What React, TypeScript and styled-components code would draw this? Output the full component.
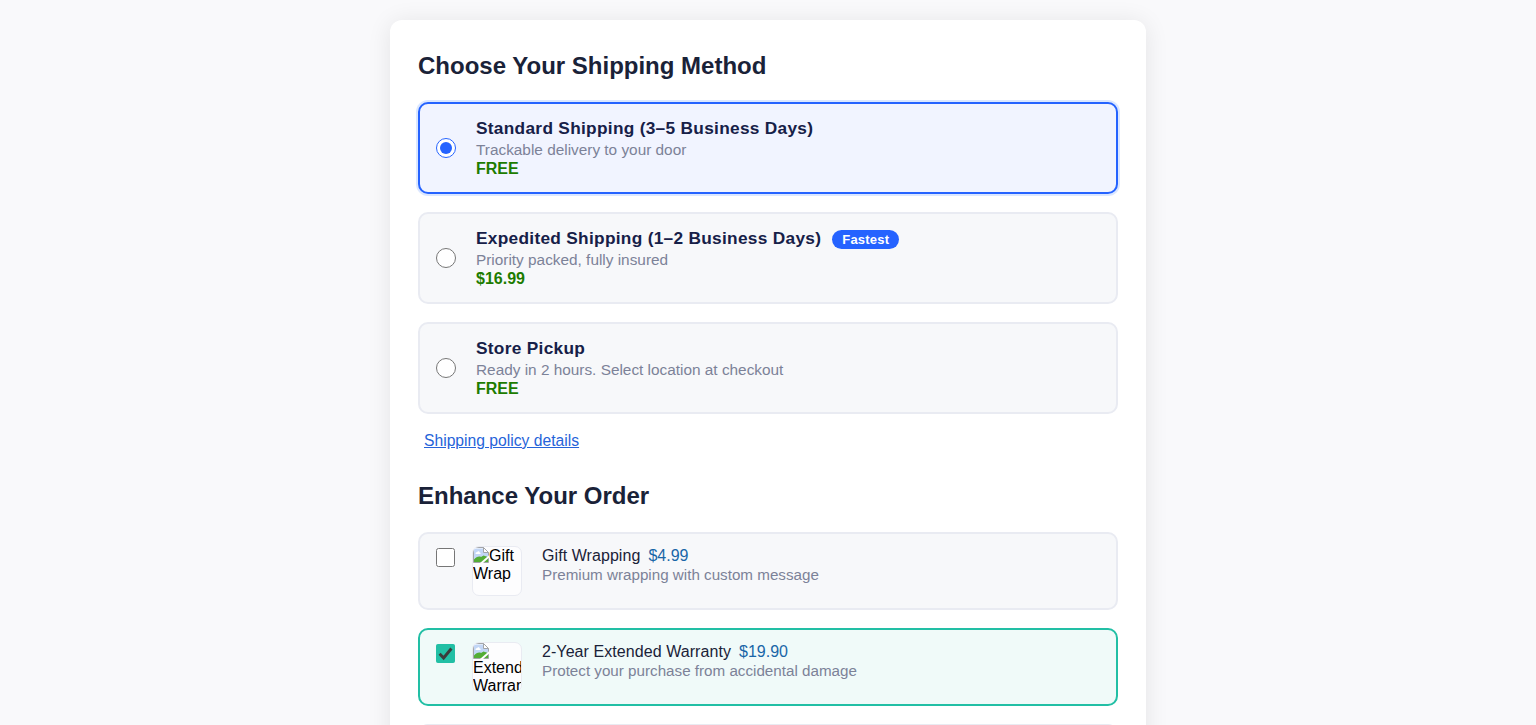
import React, { useState } from "react";
import styled, { createGlobalStyle } from "styled-components";

const GlobalStyle = createGlobalStyle`
  body {
    margin: 0;
    background: #f9f9fb;
    font-family: "Liberation Sans", Arial, sans-serif;
    font-size: 16px;
    color: #1a2238;
  }
`;

const Page = styled.div`
  height: 100vh;
  overflow: hidden;
  display: flex;
  justify-content: center;
  align-items: flex-start;
`;

const Panel = styled.main`
  width: 700px;
  margin-top: 20px;
  padding: 32px 28px;
  background: #fff;
  border-radius: 12px;
  box-shadow: 0 2px 24px rgba(0, 0, 0, 0.09);
`;

const Heading = styled.h2`
  margin: 0 0 22px;
  font-size: 24px;
  line-height: 28px;
  font-weight: 700;
  color: #1a2238;
`;

const OptionList = styled.div`
  display: flex;
  flex-direction: column;
  gap: 18px;
`;

const ShippingOption = styled.label<{ $selected: boolean }>`
  box-sizing: border-box;
  height: 92px;
  display: flex;
  align-items: center;
  gap: 20px;
  padding: 0 16px;
  border: 2px solid ${(p) => (p.$selected ? "#2563ff" : "#e9ebf2")};
  border-radius: 10px;
  background: ${(p) => (p.$selected ? "#f1f4ff" : "#f7f8fa")};
  box-shadow: ${(p) => (p.$selected ? "0 0 0 2px #dbe7ff" : "none")};
  cursor: pointer;
`;

const Radio = styled.input.attrs({ type: "radio" })`
  width: 20px;
  height: 20px;
  margin: 0;
  accent-color: #2563ff;
`;

const Details = styled.div`
  display: flex;
  flex-direction: column;
`;

const OptionTitle = styled.div`
  display: flex;
  align-items: center;
  height: 20px;
  margin-bottom: 3px;
  font-size: 17.28px;
  font-weight: 700;
  letter-spacing: 0.3px;
  color: #162048;
`;

const Badge = styled.span`
  margin: 3px 0 0 11px;
  padding: 0 10px;
  border-radius: 10px;
  background: #2563ff;
  color: #fff;
  font-size: 13px;
  line-height: 19px;
  letter-spacing: 0.2px;
`;

const Note = styled.div<{ $size?: string }>`
  font-size: ${(p) => p.$size ?? "15.2px"};
  line-height: 18px;
  color: #7c8298;
`;

const Price = styled.div`
  margin-top: 1px;
  font-size: 16px;
  line-height: 18px;
  font-weight: 700;
  color: #1d7c00;
`;

const PolicyLink = styled.a`
  display: block;
  width: fit-content;
  margin: 18px 0 32px 6px;
  font-size: 15.68px;
  line-height: 18px;
  color: #2563d9;
  text-decoration: underline;
`;

const AddOn = styled.label<{ $selected: boolean }>`
  box-sizing: border-box;
  height: 78px;
  display: flex;
  align-items: flex-start;
  padding: 12px 16px;
  border: 2px solid ${(p) => (p.$selected ? "#22bfa5" : "#e9ebf2")};
  border-radius: 10px;
  background: ${(p) => (p.$selected ? "#f0faf9" : "#f7f8fa")};
  cursor: pointer;
`;

const CheckboxSlot = styled.span`
  display: grid;
  margin: 2px 17px 0 0;

  > * {
    grid-area: 1 / 1;
  }

  svg {
    pointer-events: none;
  }
`;

const Checkbox = styled.input.attrs({ type: "checkbox" })`
  appearance: none;
  box-sizing: border-box;
  width: 19px;
  height: 19px;
  margin: 0;
  border: 1px solid #767676;
  border-radius: 2.5px;
  background: #fff;

  &:checked {
    border-color: #22bfa5;
    background: #22bfa5;
    border-radius: 1.5px;
  }
`;

const Thumbnail = styled.span`
  box-sizing: border-box;
  width: 50px;
  height: 50px;
  margin-right: 20px;
  border: 1px solid #e9ebf2;
  border-radius: 7px;
  background: #fdfdfe;
  overflow: hidden;
  line-height: 18px;
  color: #000;

  svg {
    float: left;
  }
`;

const AddOnTitle = styled.div`
  display: flex;
  gap: 8px;
  margin: 1px 0;
  line-height: 18px;
`;

const AddOnName = styled.span`
  letter-spacing: 0.07px;
`;

const AddOnPrice = styled.span`
  color: #1966a8;
`;

function Tick() {
  return (
    <svg width="19" height="19" viewBox="0 0 19 19">
      <path d="M3.600 9.800 7.600 14 15.400 4.500" fill="none" stroke="#3b3b3b" strokeWidth="2.900" />
    </svg>
  );
}

function MissingPicture() {
  return (
    <svg width="16" height="16" viewBox="0 0 16 16">
      <path d="M.5.5h10l5 5v10H.5z" fill="#fff" />
      <path d="M1 1.500h10v4h4V15H1z" fill="#c2d6f6" />
      <path d="M2.500 6.500c0-1 .8-1.500 1.600-1.300C4.500 4 6.500 4 6.700 5.500c1 0 1.200 1 .7 1.500H2.800z" fill="#fff" />
      <path d="M1 15v-2.500c2-2.500 5-3.500 7-2.500l2.500-1.500L15 10v5z" fill="#53ad36" />
      <path d="M.5 15.500V.5h10l5 5v10z" fill="none" stroke="#a3a5a8" />
      <path d="M10.500.5v5h5z" fill="#fff" stroke="#a3a5a8" />
      <path d="M7 16 16 8.200V10.800L10 16z" fill="#fff" />
    </svg>
  );
}

const shipping = [
  { title: "Standard Shipping (3–5 Business Days)", note: "Trackable delivery to your door", price: "FREE" },
  { title: "Expedited Shipping (1–2 Business Days)", note: "Priority packed, fully insured", price: "$16.99", badge: "Fastest" },
  { title: "Store Pickup", note: "Ready in 2 hours. Select location at checkout", price: "FREE" },
];

const addOns = [
  { title: "Gift Wrapping", price: "$4.99", note: "Premium wrapping with custom message", alt: "Gift Wrap" },
  { title: "2-Year Extended Warranty", price: "$19.90", note: "Protect your purchase from accidental damage", alt: "Extended Warranty" },
];

export default function App() {
  const [method, setMethod] = useState(0);
  const [extras, setExtras] = useState([false, true]);

  return (
    <Page>
      <GlobalStyle />
      <Panel>
        <Heading>Choose Your Shipping Method</Heading>
        <OptionList>
          {shipping.map((s, i) => (
            <ShippingOption key={s.title} $selected={method === i}>
              <Radio name="shipping" checked={method === i} onChange={() => setMethod(i)} />
              <Details>
                <OptionTitle>
                  {s.title}
                  {s.badge && <Badge>{s.badge}</Badge>}
                </OptionTitle>
                <Note $size="15.36px">{s.note}</Note>
                <Price>{s.price}</Price>
              </Details>
            </ShippingOption>
          ))}
        </OptionList>
        <PolicyLink href="#">Shipping policy details</PolicyLink>
        <Heading>Enhance Your Order</Heading>
        <OptionList>
          {addOns.map((a, i) => (
            <AddOn key={a.title} $selected={extras[i]}>
              <CheckboxSlot>
                <Checkbox
                  checked={extras[i]}
                  onChange={() => setExtras(extras.map((v, j) => (j === i ? !v : v)))}
                />
                {extras[i] && <Tick />}
              </CheckboxSlot>
              <Thumbnail>
                <MissingPicture />
                {a.alt}
              </Thumbnail>
              <Details>
                <AddOnTitle>
                  <AddOnName>{a.title}</AddOnName>
                  <AddOnPrice>{a.price}</AddOnPrice>
                </AddOnTitle>
                <Note>{a.note}</Note>
              </Details>
            </AddOn>
          ))}
          <AddOn $selected={false} />
        </OptionList>
      </Panel>
    </Page>
  );
}
